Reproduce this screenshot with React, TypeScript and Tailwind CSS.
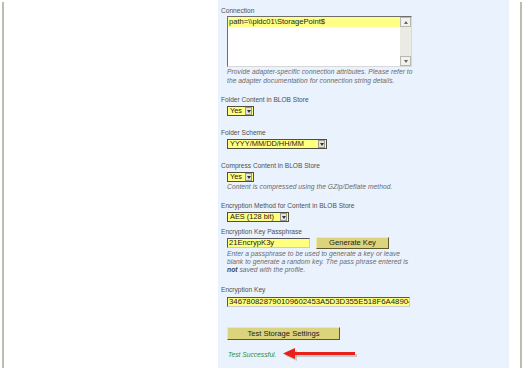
import React from "react";

const label = "pl-[3px] text-[6.6px] leading-[9px] text-[#505050]";
const hint = "pl-[9px] text-[6.7px] italic tracking-[0.05px] text-[#6a6a6a]";

const Select = ({ value, className }: { value: string; className: string }) => (
  <div className={`ml-[9px] flex h-[10px] items-center justify-between border border-[#50503a] bg-[#ffff80] pl-[2px] pr-[1px] ${className}`}>
    <span className="text-[7.4px] leading-[8px] text-[#222]">{value}</span>
    <div className="flex h-[8px] w-[7px] items-center justify-center border border-[#9a9a90] bg-[#e4e4dc]">
      <svg width="4" height="3" viewBox="0 0 4 3">
        <path d="M0 0h4L2 3z" fill="#333" />
      </svg>
    </div>
  </div>
);

const Button = ({ text, className }: { text: string; className: string }) => (
  <div
    className={`flex items-center justify-center border border-t-[#eeeaa8] border-l-[#eeeaa8] border-r-[#5e5a2e] border-b-[#5e5a2e] bg-[#dcd47c] text-[7.6px] text-[#222] ${className}`}
  >
    {text}
  </div>
);

export default function App() {
  return (
    <div className="flex h-[368px] w-[523px] overflow-hidden bg-white font-['Liberation_Sans',Arial,sans-serif]">
      <div className="w-[2px]" />
      <div className="mt-[2px] h-[366px] w-[2px] bg-[#bdbdae]" />
      <div className="w-[214px]" />
      <div className="flex w-[291px] flex-col bg-[#eaf2fd] pt-[6px]">
        <div className={label}>Connection</div>
        <div className="ml-[9px] mt-[1px] flex h-[51px] w-[185px] border border-t-[#6e6e6e] border-l-[#6e6e6e] border-r-[#d8d8d8] border-b-[#d8d8d8] bg-white">
          <div className="flex-1">
            <div className="h-[10px] bg-[#ffff88] pl-[1px] text-[7.6px] leading-[10px] text-[#222]">
              path=\\pldc01\StoragePoint$
            </div>
          </div>
          <div className="flex w-[11px] flex-col justify-between bg-[#ebebe4]">
            <div className="flex h-[10px] items-center justify-center border border-[#b8b8b0] bg-[#f2f2ec]">
              <svg width="4" height="3" viewBox="0 0 4 3">
                <path d="M0 3h4L2 0z" fill="#666" />
              </svg>
            </div>
            <div className="flex h-[10px] items-center justify-center border border-[#b8b8b0] bg-[#f2f2ec]">
              <svg width="4" height="3" viewBox="0 0 4 3">
                <path d="M0 0h4L2 3z" fill="#666" />
              </svg>
            </div>
          </div>
        </div>
        <div className={`${hint} leading-[9px]`}>
          Provide adapter-specific connection attributes. Please refer to
          <br />
          the adapter documentation for connection string details.
        </div>

        <div className={`${label} mt-[10px]`}>Folder Content in BLOB Store</div>
        <Select value="Yes" className="mt-[2px] w-[27px]" />

        <div className={`${label} mt-[12px]`}>Folder Scheme</div>
        <Select value="YYYY/MM/DD/HH/MM" className="mt-[2px] w-[100px]" />

        <div className={`${label} mt-[12px]`}>Compress Content in BLOB Store</div>
        <Select value="Yes" className="mt-[2px] w-[27px]" />
        <div className={`${hint} leading-[9px]`}>Content is compressed using the GZip/Deflate method.</div>

        <div className={`${label} mt-[10px]`}>Encryption Method for Content in BLOB Store</div>
        <Select value="AES (128 bit)" className="mt-[2px] w-[62px]" />

        <div className={`${label} mt-[5px]`}>Encryption Key Passphrase</div>
        <div className="mt-[1px] flex h-[12px] items-center pl-[9px]">
          <div className="h-[10px] w-[83px] border border-t-[#555] border-l-[#555] border-r-[#ccc] border-b-[#ccc] bg-[#ffff80] pl-[1px] text-[7.6px] leading-[8px] text-[#222]">
            21EncrypK3y
          </div>
          <Button text="Generate Key" className="ml-[6px] h-[12px] w-[73px]" />
        </div>
        <div className={`${hint} mt-[1px] leading-[8px]`}>
          Enter a passphrase to be used to generate a key or leave
          <br />
          blank to generate a random key. The pass phrase entered is
          <br />
          <b className="text-[#444]">not</b> saved with the profile.
        </div>

        <div className={`${label} mt-[11px]`}>Encryption Key</div>
        <div className="ml-[9px] mt-[3px] h-[10px] w-[183px] overflow-hidden whitespace-nowrap border border-t-[#555] border-l-[#555] border-r-[#ccc] border-b-[#ccc] bg-[#ffff80] pl-[1px] text-[7.8px] leading-[8px] text-[#222]">
          346780828790109602453A5D3D355E518F6A48904
        </div>

        <Button text="Test Storage Settings" className="ml-[9px] mt-[20px] h-[13px] w-[113px]" />

        <div className="mt-[7px] flex items-center pl-[10px]">
          <span className="text-[6.7px] italic leading-[9px] text-[#2f8f3a]">Test Successful.</span>
          <svg className="ml-[6px]" width="78" height="14" viewBox="0 0 78 14">
            <path d="M12 8.5h63" stroke="#999" strokeOpacity="0.45" strokeWidth="3.2" />
            <path d="M3 8.5l12-5.5v11z" fill="#999" fillOpacity="0.45" />
            <path d="M10 6.5h63" stroke="#e8201c" strokeWidth="3" />
            <path d="M1 6.5l12-5.5v11z" fill="#e8201c" />
          </svg>
        </div>
      </div>
      <div className="w-[11px]" />
      <div className="mt-[2px] h-[366px] w-[2px] bg-[#bdbdae]" />
    </div>
  );
}
